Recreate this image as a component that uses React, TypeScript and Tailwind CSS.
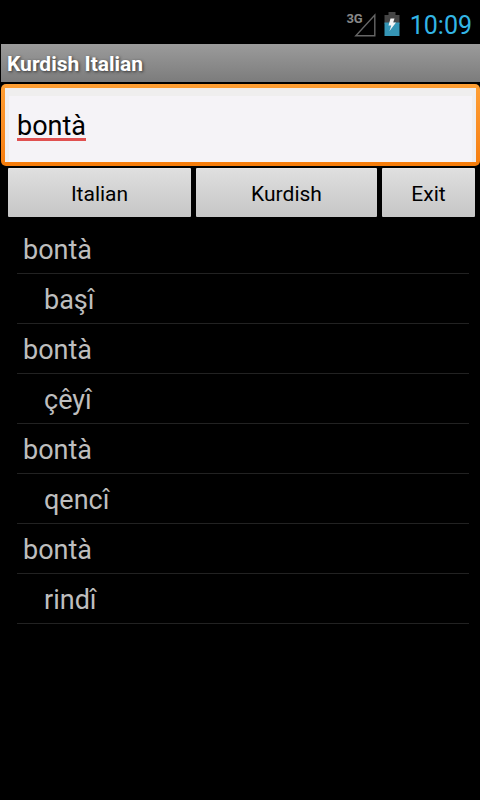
import { useState } from "react";

const ENTRIES = [
  { source: "bontà", target: "başî" },
  { source: "bontà", target: "çêyî" },
  { source: "bontà", target: "qencî" },
  { source: "bontà", target: "rindî" },
];

function SignalIcon() {
  return (
    <svg viewBox="0 0 22 24" className="h-6 w-[22px]" aria-label="3G signal">
      <path d="M1.8 22.8H20.8V2Z" fill="none" stroke="#666" strokeWidth="1.4" />
    </svg>
  );
}

function BatteryIcon() {
  return (
    <svg viewBox="0 0 16 24" className="h-6 w-4" aria-label="Battery charging">
      <path d="M4.5 0H11.5V3H15.5V12H0.5V3H4.5Z" fill="#454545" />
      <path d="M0.5 10.5H15.5V24H0.5Z" fill="#3595b5" />
      <path d="M6.5 6.5H10.5L9.2 10.5H12L5.5 19L7.2 13.5H4.5Z" fill="#f4f4f4" />
    </svg>
  );
}

function StatusBar() {
  return (
    <div className="flex h-11 items-end justify-end bg-black pr-2">
      <div className="flex items-start pb-[7px]">
        <span className="-mr-[9px] text-[13px] leading-3 font-bold text-[#888]">3G</span>
        <SignalIcon />
      </div>
      <div className="ml-2 pb-2">
        <BatteryIcon />
      </div>
      <span className="ml-[10px] pb-[3px] text-[25px] leading-[30px] text-[#33b5e5]">10:09</span>
    </div>
  );
}

function LangButton({ label }: { label: string }) {
  return (
    <button
      type="button"
      className="h-[49px] rounded-[1px] border-t border-[#e6e6e6] bg-linear-to-b from-[#dfdfdf] to-[#c6c6c6] pt-[3px] text-[21px] text-black"
    >
      {label}
    </button>
  );
}

function EntryRow({ text, indent }: { text: string; indent?: boolean }) {
  return (
    <li
      className={
        indent
          ? "flex h-[50px] items-center border-b border-[#222] pt-[3px] pl-[27px]"
          : "flex h-[50px] items-center border-b border-[#222] pt-[3px] pl-[6px]"
      }
    >
      {text}
    </li>
  );
}

export default function App() {
  const [query, setQuery] = useState("bontà");

  return (
    <div className="min-h-screen bg-black font-[Roboto,sans-serif]">
      <StatusBar />
      <h1 className="ml-px flex h-[38px] items-center bg-linear-to-b from-[#9b9b9b] to-[#7c7c7c] pt-[3px] pl-[6px] text-[21px] font-bold text-white text-shadow-[1px_1px_3px_#333]">
        Kurdish Italian
      </h1>
      <div className="mt-[2px] ml-px rounded-[5px] bg-linear-to-b from-[#ff9f33] to-[#f57c0a] p-1">
        <input
          type="text"
          aria-label="Search word"
          value={query}
          onChange={(e) => setQuery(e.target.value)}
          className="block h-[74px] w-full border-x-4 border-t-8 border-[#efeeee] bg-[#f5f3f7] pb-[6px] pl-2 text-[27px] text-black underline decoration-[#e05050] decoration-3 underline-offset-[3px] outline-none"
        />
      </div>
      <div className="mt-[2px] grid grid-cols-[183fr_181fr_93fr] gap-[5px] pr-[5px] pl-2">
        <LangButton label="Italian" />
        <LangButton label="Kurdish" />
        <LangButton label="Exit" />
      </div>
      <ul className="mt-[7px] mr-[11px] ml-[17px] text-[27px] text-[#bebebe]">
        {ENTRIES.map((entry) => [
          <EntryRow key={`${entry.target}-source`} text={entry.source} />,
          <EntryRow key={entry.target} text={entry.target} indent />,
        ])}
      </ul>
    </div>
  );
}
